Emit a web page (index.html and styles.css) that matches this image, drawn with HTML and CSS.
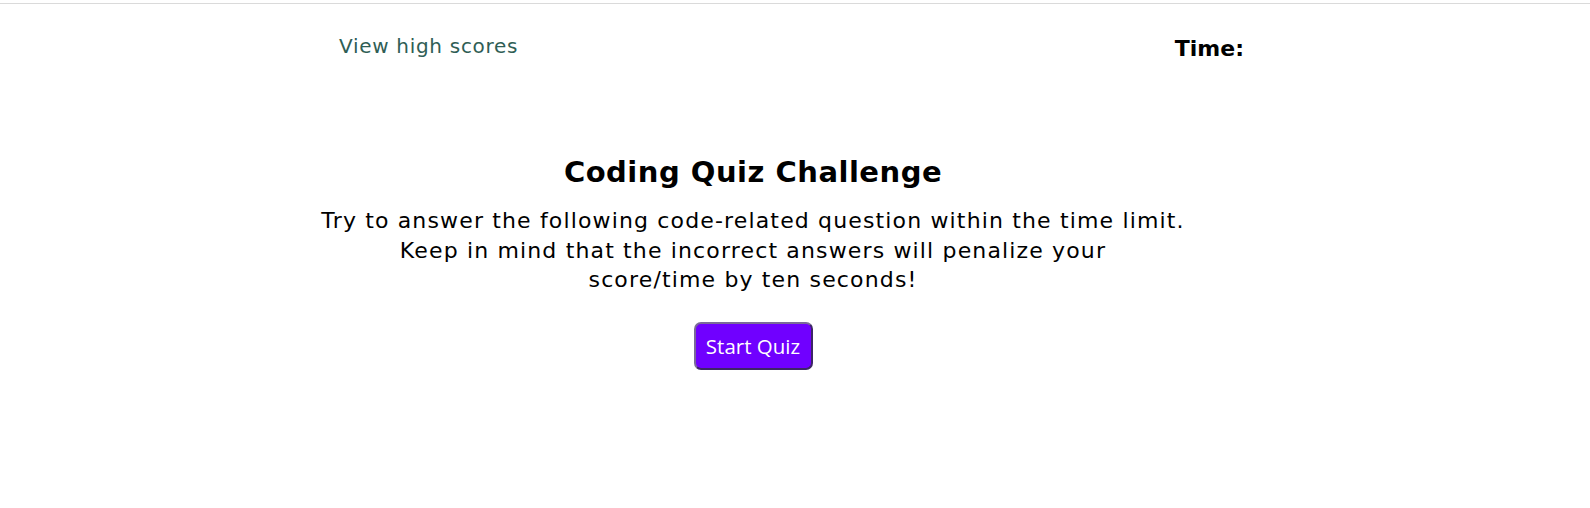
FILE: index.html
```html
<!DOCTYPE html>
<html lang="en">
<head>
<meta charset="utf-8">
<title>Coding Quiz</title>
<link rel="stylesheet" href="styles.css">
</head>
<body>
<header class="top-bar">
  <div class="top-inner">
    <a class="high-scores" href="#">View high scores</a>
    <div class="timer">Time:<span class="time-left"></span></div>
  </div>
</header>
<main class="intro">
  <h1 class="title">Coding Quiz Challenge</h1>
  <p class="lead">Try to answer the following code-related question within the time limit.<br>Keep in mind that the incorrect answers will penalize your<br>score/time by ten seconds!</p>
  <button class="start-btn" type="button">Start Quiz</button>
</main>
</body>
</html>
```
FILE: styles.css
```css
html, body {
  margin: 0;
  padding: 0;
  background: #ffffff;
}
body {
  padding-top: 3px;
  font-family: "DejaVu Sans", Verdana, sans-serif;
  color: #000;
}
.top-bar {
  border-top: 1px solid #dadada;
}
.top-inner {
  display: flex;
  justify-content: space-between;
  align-items: flex-start;
  margin: 0 20%;
  padding: 32px 28px 0 21px;
}
.high-scores {
  color: #2f5e55;
  text-decoration: none;
  font-size: 20px;
  line-height: 20px;
  letter-spacing: 0.7px;
}
.timer {
  margin-top: 2px;
  font-size: 22px;
  line-height: 22px;
  font-weight: bold;
}
.intro {
  margin: 0 0 0 20%;
  width: 870px;
  display: flex;
  flex-direction: column;
  align-items: center;
  text-align: center;
  padding-top: 95px;
}
.title {
  margin: 0;
  font-size: 29px;
  line-height: 34px;
  font-weight: bold;
  letter-spacing: 0.5px;
}
.lead {
  margin: 17px 0 0;
  font-size: 22px;
  line-height: 29.5px;
  letter-spacing: 1.15px;
}
.start-btn {
  margin-top: 27px;
  width: 119px;
  height: 48px;
  border: 2px solid;
  border-color: #7b6a98 #3d2666 #3d2666 #7b6a98;
  border-radius: 7px;
  background: #7000ff;
  color: #fff;
  font-family: "Open Sans", "Lato", sans-serif;
  font-size: 20.5px;
  padding: 0;
}
```
